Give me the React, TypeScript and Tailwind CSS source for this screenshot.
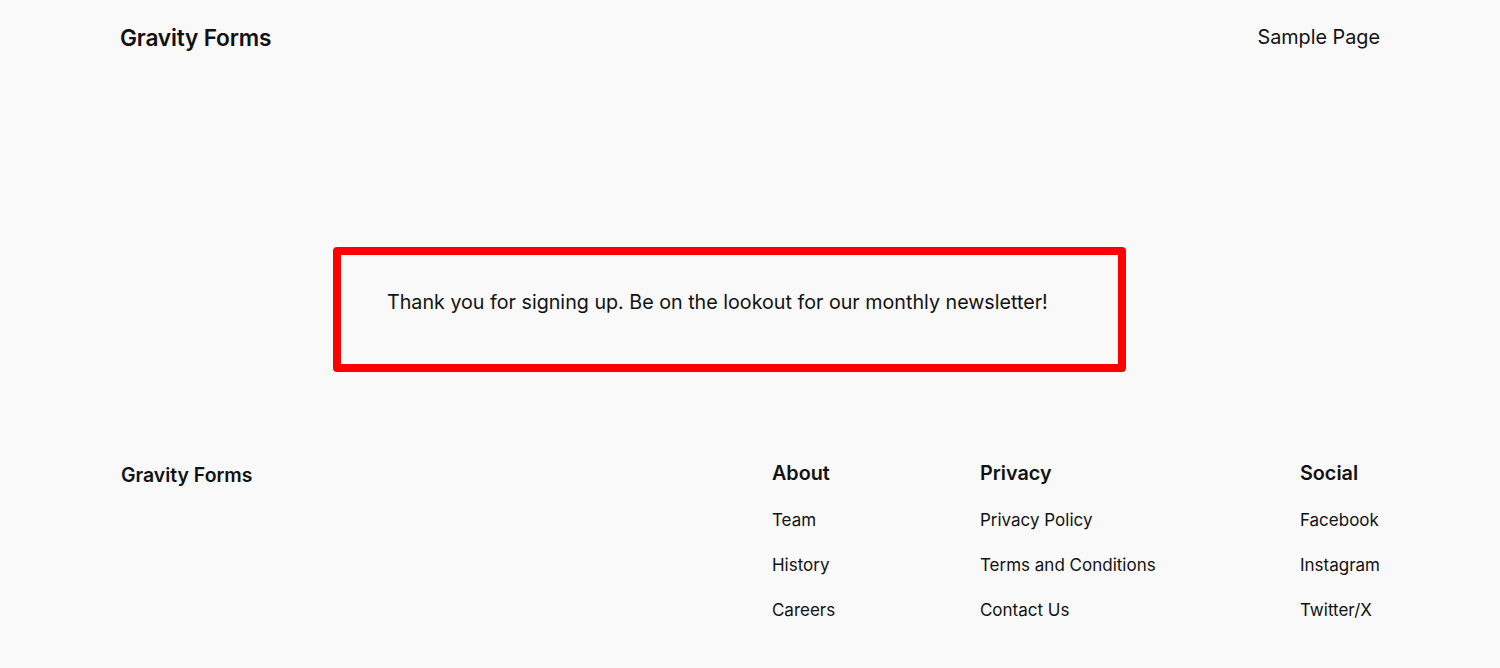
import React from "react";

const footerColumns = [
  { title: "About", links: ["Team", "History", "Careers"], width: "w-[208px]" },
  { title: "Privacy", links: ["Privacy Policy", "Terms and Conditions", "Contact Us"], width: "w-[320px]" },
  { title: "Social", links: ["Facebook", "Instagram", "Twitter/X"], width: "" },
];

export default function App() {
  return (
    <div
      className="min-h-[668px] bg-[#f9f9f9] text-[#111] px-[120px]"
      style={{ fontFamily: "Inter, 'Noto Sans', sans-serif" }}
    >
      {/* Header */}
      <header className="flex justify-between items-center pt-[21px]">
        <span className="text-[22.7px] font-semibold tracking-[-0.2px]">Gravity Forms</span>
        <span className="text-[19.8px]">Sample Page</span>
      </header>

      {/* Confirmation */}
      <main className="pt-[192px]">
        <div className="ml-[213px] w-[793px] h-[125px] border-[8px] border-[#ff0000] rounded-[4px] pl-[46px] pt-[33px]">
          <p className="text-[19.7px] leading-[28px]">
            Thank you for signing up. Be on the lookout for our monthly newsletter!
          </p>
        </div>
      </main>

      {/* Footer */}
      <footer className="flex justify-between pt-[88px]">
        <div className="text-[19.4px] font-semibold pt-[1px] pl-px">Gravity Forms</div>
        <div className="flex pl-px">
          {footerColumns.map((col) => (
            <div key={col.title} className={col.width}>
              <h4 className="text-[19.8px] font-semibold leading-[28px] -mt-[1px]">{col.title}</h4>
              <ul className="mt-[19px] space-y-[17px]">
                {col.links.map((l) => (
                  <li key={l} className="text-[17px] leading-[28px]">{l}</li>
                ))}
              </ul>
            </div>
          ))}
        </div>
      </footer>
    </div>
  );
}
